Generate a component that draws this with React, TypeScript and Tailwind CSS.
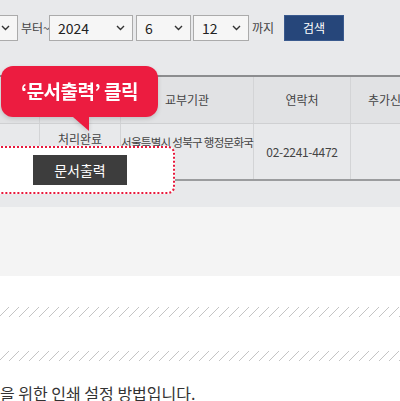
import React from "react";

function Chevron() {
  return (
    <svg width="9" height="6" viewBox="0 0 9 6" className="shrink-0">
      <path d="M1 1l3.5 3.5L8 1" fill="none" stroke="#333" strokeWidth="1.4" />
    </svg>
  );
}

function FakeSelect({ value, className }: { value: string; className: string }) {
  return (
    <div
      className={`flex h-[26px] shrink-0 items-center justify-between border border-[#ababab] bg-[#f6f6f6] pl-2 pr-[7px] text-[14px] text-[#222] ${className}`}
    >
      <span>{value}</span>
      <Chevron />
    </div>
  );
}

function Hatch() {
  return (
    <div className="h-[10px] w-full bg-[repeating-linear-gradient(135deg,transparent_0,transparent_6px,#c4c4c4_6px,#c4c4c4_7.07px)]" />
  );
}

export default function App() {
  return (
    <div className="relative h-[401px] w-[400px] overflow-hidden bg-white font-['Noto_Sans_CJK_KR',sans-serif] text-[#333]">
      <div className="h-[207px] bg-[#e8e9eb] pt-[15px]">
        <div className="ml-[-62px] flex h-[26px] items-center whitespace-nowrap">
          <FakeSelect value="" className="w-[80px]" />
          <span className="ml-[3px] w-[28px] shrink-0 text-[12px] text-[#444]">부터~</span>
          <FakeSelect value="2024" className="w-[84px]" />
          <FakeSelect value="6" className="ml-[3px] w-[55px]" />
          <FakeSelect value="12" className="ml-[2px] w-[56px]" />
          <span className="ml-[3px] shrink-0 text-[12px] text-[#444]">까지</span>
          <button className="ml-[10px] h-[26px] w-[60px] shrink-0 border border-[#3a5a8e] bg-[#26467a] text-[12px] text-white">
            검색
          </button>
        </div>

        <div className="ml-[-80px] mt-[34px] w-[528px] border-t-2 border-b-2 border-t-[#8c8d8f] border-b-[#9b9c9e] text-[12px] whitespace-nowrap">
          <div className="flex h-[47px] border-b border-[#cfd0d2] bg-[#e1e2e4] text-[#444]">
            <div className="w-[120px] shrink-0 border-r border-[#d3d4d6]" />
            <div className="w-[81px] shrink-0 border-r border-[#d3d4d6]" />
            <div className="flex w-[133px] shrink-0 items-center justify-center border-r border-[#d3d4d6]">교부기관</div>
            <div className="flex w-[97px] shrink-0 items-center justify-center border-r border-[#d3d4d6]">연락처</div>
            <div className="flex w-[78px] shrink-0 items-center justify-center">추가신청</div>
          </div>
          <div className="flex h-[55px] text-[#444]">
            <div className="w-[120px] shrink-0 border-r border-[#d3d4d6]" />
            <div className="w-[81px] shrink-0 border-r border-[#d3d4d6] pt-[6px] text-center">처리완료</div>
            <div className="w-[133px] shrink-0 border-r border-[#d3d4d6] pt-[10px] text-center text-[11.5px] tracking-[-0.7px]">
              서울특별시 성북구 행정문화국
            </div>
            <div className="flex w-[97px] shrink-0 items-center justify-center border-r border-[#d3d4d6] tracking-[-0.3px]">
              02-2241-4472
            </div>
            <div className="w-[78px] shrink-0" />
          </div>
        </div>
      </div>

      <div className="h-[69px] bg-[#f4f4f4]" />

      <div className="pt-[31px]">
        <Hatch />
        <div className="h-[34px]" />
        <Hatch />
        <p className="mt-[20px] whitespace-nowrap text-[16px] text-[#333]">을 위한 인쇄 설정 방법입니다.</p>
      </div>

      {/* highlighted print button */}
      <div className="absolute left-[-20px] top-[146px] flex h-[48px] w-[195px] items-center rounded-r-[7px] border-2 border-dotted border-[#e8193c] bg-white">
        <div className="ml-[51px] flex h-[30px] w-[94px] items-center justify-center bg-[#3d3d3d] text-[14px] text-white">
          문서출력
        </div>
      </div>

      {/* tooltip */}
      <div className="absolute left-[1px] top-[66px] drop-shadow-[0_2px_2px_rgba(0,0,0,0.15)]">
        <div className="flex h-[51px] w-[157px] items-center justify-center rounded-[12px] bg-[#ec1c40] text-[19px] font-bold tracking-[-0.5px] text-white">
          ‘문서출력’ 클릭
        </div>
        <svg width="16" height="14" viewBox="0 0 16 14" className="ml-[72px] block">
          <path d="M0 0H16V14Z" fill="#ec1c40" />
        </svg>
      </div>
    </div>
  );
}
